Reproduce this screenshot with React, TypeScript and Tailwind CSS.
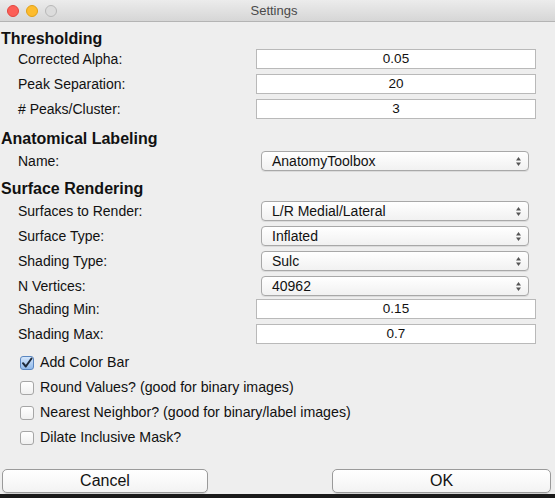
import React from "react";

const font = { fontFamily: '"Liberation Sans", Arial, sans-serif' };

const TextField = ({ value }: { value: string }) => (
  <div className="w-[280px] h-[20px] bg-white border border-[#b9b9b9] flex items-center justify-center text-[13.5px] text-[#111]">
    {value}
  </div>
);

const SelectBox = ({ value }: { value: string }) => (
  <div className="w-[268px] h-[20px] mx-[5px] rounded-[4px] border border-[#a8a8a8] bg-gradient-to-b from-white to-[#f1f1f1] shadow-[0_1px_0_rgba(0,0,0,0.08)] flex items-center justify-between pl-[10px] pr-[6px] text-[14px] text-[#111]">
    <span>{value}</span>
    <svg width="7" height="11" viewBox="0 0 7 11">
      <path d="M3.5 1 L6 4.5 H1 Z" fill="#555" />
      <path d="M3.5 10 L6 6.5 H1 Z" fill="#555" />
    </svg>
  </div>
);

const Row = ({ label, children, mt }: { label: string; children: React.ReactNode; mt: string }) => (
  <div className={`flex items-center h-[20px] ${mt}`}>
    <div className="w-[256px] pl-[18px] text-[14px] text-[#111]">{label}</div>
    {children}
  </div>
);

const Heading = ({ text, mt }: { text: string; mt: string }) => (
  <div className={`h-[20px] flex items-center pl-[1px] text-[16px] font-bold text-[#111] ${mt}`}>{text}</div>
);

const Check = ({ label, checked, mt }: { label: string; checked?: boolean; mt: string }) => (
  <div className={`h-[20px] flex items-center pl-[20px] ${mt}`}>
    {checked ? (
      <div className="w-[14px] h-[14px] rounded-[3px] border border-[#5a86c0] bg-gradient-to-b from-[#d4e6fb] to-[#8fb8ea] flex items-center justify-center">
        <svg width="12" height="12" viewBox="0 0 12 12">
          <path d="M2 6.2 L4.8 9.5 L10.5 1.5" stroke="#1e2a3a" strokeWidth="2" fill="none" strokeLinecap="round" strokeLinejoin="round" />
        </svg>
      </div>
    ) : (
      <div className="w-[14px] h-[14px] rounded-[3px] border border-[#a6a6a6] bg-gradient-to-b from-white to-[#f0f0f0]" />
    )}
    <span className="ml-[6px] text-[14.2px] text-[#111]">{label}</span>
  </div>
);

const Button = ({ label, w }: { label: string; w: string }) => (
  <div className={`${w} h-[24px] rounded-[5px] border border-[#9a9a9a] bg-gradient-to-b from-white to-[#f3f3f3] shadow-[0_1px_0_rgba(0,0,0,0.12)] flex items-center justify-center text-[16px] text-[#111]`}>
    {label}
  </div>
);

export default function App() {
  return (
    <div className="w-[555px] h-[498px] bg-[#eeeeee] flex flex-col overflow-hidden" style={font}>
      {/* title bar */}
      <div className="h-[22px] shrink-0 bg-gradient-to-b from-[#ececec] to-[#d6d6d6] border-b border-[#b4b4b4] flex items-center relative">
        <div className="flex gap-[7px] pl-[7px]">
          <div className="w-[12px] h-[12px] rounded-full bg-[#fc5f57] border border-[#e2463f]" />
          <div className="w-[12px] h-[12px] rounded-full bg-[#fdbc2e] border border-[#e1a116]" />
          <div className="w-[12px] h-[12px] rounded-full bg-[#dcdcdc] border border-[#b8b8b8]" />
        </div>
        <div className="flex-1 text-center text-[13px] text-[#4a4a4a] pr-[64px]">Settings</div>
      </div>

      <Heading text="Thresholding" mt="mt-[7px]" />
      <Row label="Corrected Alpha:" mt="mt-0"><TextField value="0.05" /></Row>
      <Row label="Peak Separation:" mt="mt-[5px]"><TextField value="20" /></Row>
      <Row label="# Peaks/Cluster:" mt="mt-[5px]"><TextField value="3" /></Row>

      <Heading text="Anatomical Labeling" mt="mt-[10px]" />
      <Row label="Name:" mt="mt-[2px]"><SelectBox value="AnatomyToolbox" /></Row>

      <Heading text="Surface Rendering" mt="mt-[8px]" />
      <Row label="Surfaces to Render:" mt="mt-[2px]"><SelectBox value="L/R Medial/Lateral" /></Row>
      <Row label="Surface Type:" mt="mt-[5px]"><SelectBox value="Inflated" /></Row>
      <Row label="Shading Type:" mt="mt-[5px]"><SelectBox value="Sulc" /></Row>
      <Row label="N Vertices:" mt="mt-[5px]"><SelectBox value="40962" /></Row>
      <Row label="Shading Min:" mt="mt-[3px]"><TextField value="0.15" /></Row>
      <Row label="Shading Max:" mt="mt-[5px]"><TextField value="0.7" /></Row>

      <Check label="Add Color Bar" checked mt="mt-[9px]" />
      <Check label="Round Values? (good for binary images)" mt="mt-[5px]" />
      <Check label="Nearest Neighbor? (good for binary/label images)" mt="mt-[5px]" />
      <Check label="Dilate Inclusive Mask?" mt="mt-[5px]" />

      <div className="flex justify-between px-[2px] mt-[21px]">
        <Button label="Cancel" w="w-[206px]" />
        <div className="mr-[2px]"><Button label="OK" w="w-[219px]" /></div>
      </div>
      <div className="flex-1" />
      <div className="h-[4px] bg-[#1a1a1a]" />
    </div>
  );
}
